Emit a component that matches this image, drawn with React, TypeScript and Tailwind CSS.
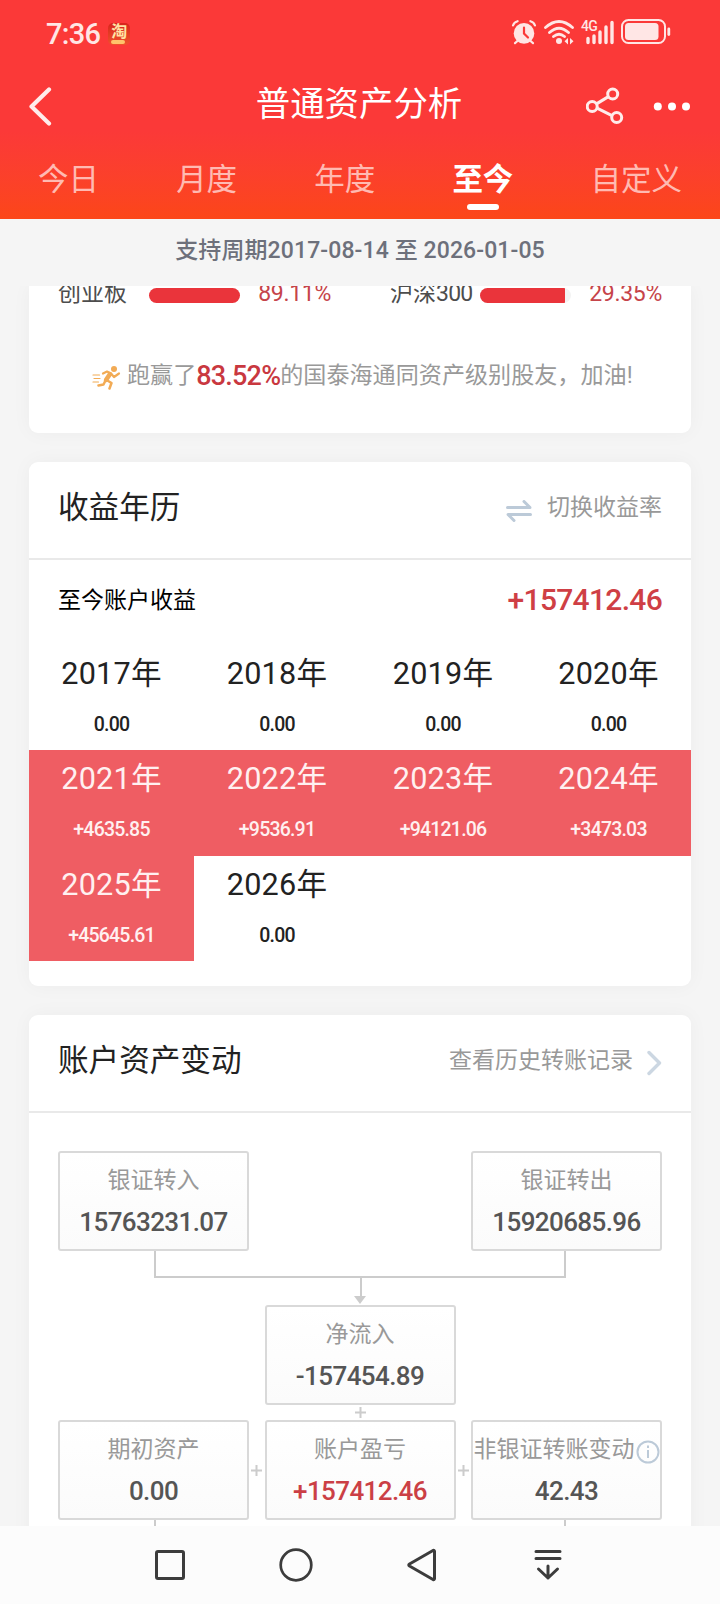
import React from 'react';

const tabs = ['今日', '月度', '年度', '至今', '自定义'];

const years = [
  { year: '2017', value: '0.00' },
  { year: '2018', value: '0.00' },
  { year: '2019', value: '0.00' },
  { year: '2020', value: '0.00' },
  { year: '2021', value: '+4635.85' },
  { year: '2022', value: '+9536.91' },
  { year: '2023', value: '+94121.06' },
  { year: '2024', value: '+3473.03' },
  { year: '2025', value: '+45645.61' },
  { year: '2026', value: '0.00' },
];

const StatusBar: React.FC = () => (
  <div className="flex h-[66px] items-center justify-between pl-[46px] pr-[49px] text-[#ffe6e5]">
    <div className="flex items-center gap-[8px] pt-[1px]">
      <span className="text-[29px] leading-[30px] font-medium tracking-[-0.7px]">7:36</span>
      <span className="flex h-[22px] w-[22px] flex-col items-center overflow-hidden rounded-[5px] bg-linear-to-b from-[#d8231c] to-[#f0502c]">
        <span className="text-[16px] leading-[17px] font-bold text-[#ffe3a4]">淘</span>
        <span className="-ml-[3px] h-[4px] w-[14px] rounded-full bg-[#ffc36b]"></span>
      </span>
    </div>
    <svg width="160" height="28" viewBox="0 0 160 28" fill="none" className="-mt-[2px]">
      {/* alarm clock */}
      <circle cx="13" cy="15.400" r="10.300" fill="currentColor" />
      <path d="M2 7.500 Q3 4 6.600 3.200 M19.400 3.200 Q23 4 24 7.500 M6.500 23 L4 25.200 M19.500 23 L22 25.200" stroke="currentColor" strokeWidth="2.200" strokeLinecap="round" />
      <path d="M13 9.500 V15.500 L17 19.500" stroke="#fb3938" strokeWidth="2.200" strokeLinecap="round" />
      {/* wifi */}
      <path d="M34.500 9.500 Q48 -2.500 61.500 9.500 M38.500 14.500 Q48 6 57.500 14.500 M42.500 18.500 Q48 14 53.500 18.500" stroke="currentColor" strokeWidth="2.800" strokeLinecap="round" />
      <circle cx="48" cy="23" r="3" fill="currentColor" />
      <path d="M53.500 23.200 L57 20 V26.500 Z M62.500 23.200 L59 20 V26.500 Z" fill="currentColor" />
      {/* signal */}
      <text x="70" y="13" fontSize="14" fontWeight="500" letterSpacing="-0.800" fill="currentColor">4G</text>
      <path d="M77 20.500 V24.500 M83 18 V24.500 M89 14 V24.500 M95 9 V24.500 M101 4.500 V24.500" stroke="currentColor" strokeWidth="3.400" strokeLinecap="round" />
      {/* battery */}
      <rect x="111" y="2" width="43" height="23" rx="6.500" stroke="currentColor" strokeWidth="2" />
      <rect x="114" y="5" width="33.500" height="17" rx="3.500" fill="currentColor" />
      <path d="M157.800 11 V16.500" stroke="currentColor" strokeWidth="2.800" strokeLinecap="round" />
    </svg>
  </div>
);

const Header: React.FC = () => (
  <header className="h-[219px] shrink-0 bg-linear-to-b from-[#fb3938] from-60% to-[#fc4618] text-white">
    <StatusBar />
    <div className="flex h-[74px] items-center justify-between pl-[28px] pr-[29px]">
      <svg width="104" height="40" viewBox="0 0 104 40" fill="none" className="mt-[6px]">
        <path d="M21 3.500 L3.500 20.500 L21 37.500" stroke="#ffeceb" strokeWidth="4.200" strokeLinecap="round" strokeLinejoin="round" />
      </svg>
      <h1 className="pt-[2px] text-[34.4px] leading-[40px]">普通资产分析</h1>
      <svg width="105" height="40" viewBox="0 0 105 40" fill="none" className="mt-[6px]">
        <g stroke="#ffeceb" strokeWidth="3">
          <circle cx="6.200" cy="20.500" r="5" />
          <circle cx="26.700" cy="8" r="5" />
          <circle cx="30.700" cy="31.500" r="5" />
          <path d="M10.500 17.900 L22.400 10.600 M11 22.100 L26 29.700" />
        </g>
        <g fill="white">
          <circle cx="71.800" cy="20.500" r="4" />
          <circle cx="86" cy="20.500" r="4" />
          <circle cx="100" cy="20.500" r="4" />
        </g>
      </svg>
    </div>
    <nav className="flex h-[79px] justify-between px-[38px] pt-[20px] text-[30.5px] leading-[40px]">
      {tabs.map((tab) =>
        tab === '至今' ? (
          <div key={tab} className="flex flex-col items-center font-bold">
            {tab}
            <span className="mt-[4px] h-[6px] w-[32px] rounded-full bg-white"></span>
          </div>
        ) : (
          <div key={tab} className="text-[#ffbab2]">{tab}</div>
        )
      )}
    </nav>
  </header>
);

const Runner: React.FC = () => (
  <svg width="29" height="25" viewBox="0 0 29 25" fill="none" stroke="#f2ab55" strokeLinecap="round" strokeLinejoin="round">
    <circle cx="22" cy="4" r="3" fill="#f2ab55" stroke="none" />
    <path d="M1 10 H7.500 M2 13.500 H8 M1 17 H6.500" strokeWidth="1.200" />
    <path d="M11 8.500 L15 6.500 L19 8.500 L22 12 L27 8.500" strokeWidth="2.200" />
    <path d="M18 9 L14 15" strokeWidth="4.500" />
    <path d="M14.500 15 L19.500 18 L17.500 23.500 M13.500 15.500 L11.500 19.500 L6.500 20.500" strokeWidth="2.500" />
  </svg>
);

const RankCard: React.FC = () => (
  <section className="h-[147px] overflow-hidden rounded-b-[9px] bg-white shadow-[0_0_20px_rgba(0,0,0,0.04)]">
    <div className="-mt-[7px] flex h-[30px] items-center px-[29px] text-[23px] leading-[30px] text-[#4d4d4d]">
      <span className="w-[91px]">创业板</span>
      <span className="mt-[3px] h-[15px] w-[91px] rounded-full bg-[#ea343b]"></span>
      <span className="w-[91px] text-right tracking-[-0.3px] text-[#c6444a]">89.11%</span>
      <span className="ml-[59px] w-[90px]">
        沪深<span className="tracking-[-0.8px]">300</span>
      </span>
      <span className="mt-[3px] h-[15px] w-[91px] overflow-hidden rounded-full bg-[#f3f3f3]">
        <span className="block h-full w-[85px] bg-[#ea343b]"></span>
      </span>
      <span className="w-[91px] text-right tracking-[-0.3px] text-[#c6444a]">29.35%</span>
    </div>
    <div className="mt-[51px] flex h-[32px] items-center pl-[63px] text-[23.1px] leading-[32px] whitespace-nowrap text-[#999]">
      <span className="mt-[2px] mr-[6px]"><Runner /></span>
      跑赢了
      <b className="text-[27px] font-medium tracking-[-0.8px] text-[#c9383f]">83.52%</b>
      的国泰海通同资产级别股友，加油!
    </div>
  </section>
);

const YearCard: React.FC = () => (
  <section className="mt-[29px] h-[524px] rounded-[9px] bg-white shadow-[0_0_20px_rgba(0,0,0,0.04)]">
    <div className="flex h-[98px] justify-between border-b-2 border-[#e9e9e9] px-[29px] pt-[26px]">
      <h2 className="text-[30.6px] leading-[40px] text-[#222]">收益年历</h2>
      <div className="flex h-[40px] items-center pt-[1px] text-[23px] text-[#999]">
        <svg width="26" height="22" viewBox="0 0 26 22" fill="none" stroke="#bccad8" strokeWidth="3" strokeLinecap="round" strokeLinejoin="round" className="mt-[5px] mr-[15px]">
          <path d="M1.500 7.500 H24 L18 1.500 M24.500 14.500 H2 L8 20.500" />
        </svg>
        切换收益率
      </div>
    </div>
    <div className="flex h-[85px] items-center justify-between px-[29px]">
      <span className="-mt-[3px] text-[23px] text-black">至今账户收益</span>
      <span className="-mt-[6px] text-[30px] font-medium tracking-[-0.7px] text-[#cf3f45]">+157412.46</span>
    </div>
    <div className="grid grid-cols-[165px_166px_166px_165px] grid-rows-[105px_106px_105px]">
      {years.map(({ year, value }) => (
        <div
          key={year}
          className={`flex flex-col items-center pt-[9px] ${value.startsWith('+') ? 'bg-[#ef5d63] text-[#fff0f0]' : 'text-[#222]'}`}
        >
          <span className="text-[30.6px] leading-[40px] tracking-[0.2px]">{year}年</span>
          <span className="mt-[17px] text-[19.5px] leading-[28px] font-medium tracking-[-0.8px]">{value}</span>
        </div>
      ))}
    </div>
  </section>
);

interface BoxProps {
  label: string;
  value: string;
  className?: string;
  children?: React.ReactNode;
}

const Box: React.FC<BoxProps> = ({ label, value, className = 'text-[#555]', children }) => (
  <div className="flex h-[100px] w-[191px] flex-col items-center rounded-[3px] border-2 border-[#d9d9d9] bg-linear-to-b from-white to-[#fbfbfb] pt-[12px]">
    <span className="flex items-center text-[23px] leading-[32px] whitespace-nowrap text-[#999]">
      {label}
      {children}
    </span>
    <span className={`mt-[10px] text-[26px] leading-[30px] font-medium tracking-[-0.6px] ${className}`}>{value}</span>
  </div>
);

const Plus: React.FC = () => (
  <svg width="11" height="11" viewBox="0 0 11 11" stroke="#ccc" strokeWidth="2">
    <path d="M0 5.500 H11 M5.500 0 V11" />
  </svg>
);

const FlowCard: React.FC = () => (
  <section className="mt-[29px] h-[640px] rounded-t-[9px] bg-white shadow-[0_0_20px_rgba(0,0,0,0.04)]">
    <div className="flex h-[98px] justify-between border-b-2 border-[#e9e9e9] px-[29px] pt-[26px]">
      <h2 className="text-[30.6px] leading-[40px] text-[#222]">账户资产变动</h2>
      <div className="flex h-[40px] items-center pt-[1px] text-[23px] text-[#999]">
        查看历史转账记录
        <svg width="15" height="26" viewBox="0 0 15 26" fill="none" stroke="#ccd7e2" strokeWidth="3.400" strokeLinecap="round" strokeLinejoin="round" className="mt-[2px] ml-[14px]">
          <path d="M2 2.500 L12.500 13 L2 23.500" />
        </svg>
      </div>
    </div>
    <div className="flex flex-col items-center px-[29px] pt-[38px]">
      <div className="flex w-full justify-between">
        <Box label="银证转入" value="15763231.07" />
        <Box label="银证转出" value="15920685.96" />
      </div>
      <svg width="604" height="54" viewBox="0 0 604 54" fill="none" stroke="#ccc" strokeWidth="2">
        <path d="M97 0 V26 H507 V0 M303 26 V46" />
        <path d="M296 45 H308 L302 53 Z" fill="#ccc" stroke="none" />
      </svg>
      <Box label="净流入" value="-157454.89" />
      <div className="flex h-[15px] items-center"><Plus /></div>
      <div className="flex w-full items-center justify-between">
        <Box label="期初资产" value="0.00" />
        <Plus />
        <Box label="账户盈亏" value="+157412.46" className="text-[#cb3f45]" />
        <Plus />
        <Box label="非银证转账变动" value="42.43">
          <svg width="24" height="24" viewBox="0 0 24 24" fill="none" stroke="#bccad8" strokeWidth="2" className="mt-[3px] ml-[1px]">
            <circle cx="12" cy="12" r="10.500" />
            <path d="M12 10 V18 M12 5.500 V8" />
          </svg>
        </Box>
      </div>
      <svg width="604" height="20" viewBox="0 0 604 20" stroke="#ccc" strokeWidth="2">
        <path d="M97 0 V20 M507 0 V20" />
      </svg>
    </div>
  </section>
);

const NavBar: React.FC = () => (
  <footer className="flex h-[78px] shrink-0 items-center bg-[#fcfcfc] pl-[154px]">
    <svg width="32" height="36" viewBox="0 0 32 36" fill="none" stroke="#3c3c3c" strokeWidth="3">
      <rect x="2.500" y="4.500" width="27" height="27" rx="1.500" />
    </svg>
    <svg width="36" height="36" viewBox="0 0 36 36" fill="none" stroke="#3c3c3c" strokeWidth="2.700" className="ml-[92px]">
      <circle cx="18" cy="18" r="15.300" />
    </svg>
    <svg width="32" height="36" viewBox="0 0 32 36" fill="none" stroke="#3c3c3c" strokeWidth="3" strokeLinejoin="round" className="ml-[91px]">
      <path d="M28 3.500 Q29.500 3 29.500 4.500 V31.500 Q29.500 33 28 32.500 L4.500 19 Q3 18 4.500 17 Z" />
    </svg>
    <svg width="28" height="36" viewBox="0 0 28 36" fill="none" stroke="#3c3c3c" strokeWidth="3" strokeLinecap="round" strokeLinejoin="round" className="ml-[97px]">
      <path d="M2 4.500 H26 M2 11.500 H26 M14 19 V31 M4.500 22 L14 31 L23.500 22" />
    </svg>
  </footer>
);

const App: React.FC = () => {
  return (
    <div className="flex h-[1604px] w-[720px] flex-col overflow-hidden bg-[#f5f5f5] font-[Roboto,'Noto_Sans_CJK_SC',sans-serif]">
      <Header />
      <div className="h-[67px] shrink-0 pt-[15px] text-center text-[23px] leading-[34px] font-medium tracking-[0.1px] text-[#6d707b]">
        支持周期2017-08-14 至 2026-01-05
      </div>
      <main className="h-[1240px] shrink-0 overflow-hidden px-[29px]">
        <RankCard />
        <YearCard />
        <FlowCard />
      </main>
      <NavBar />
    </div>
  );
};

export default App;
